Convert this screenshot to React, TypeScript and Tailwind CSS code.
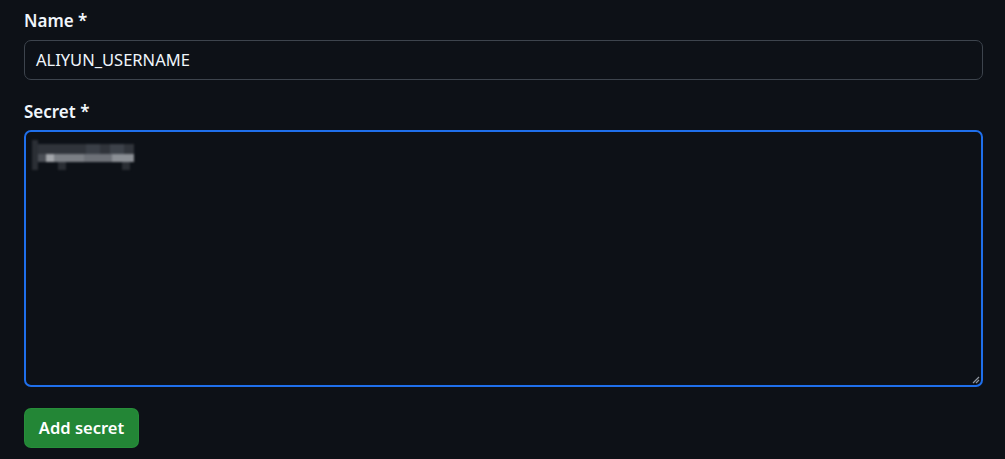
import React from "react";

// pixelated (redacted) secret value: [left, top, width, height, colour]
const MOSAIC: [number, number, number, number, string][] = [
    [6, 8, 6, 30, "#2b2f35"],
    [12, 12, 96, 10, "#30343b"],
    [60, 12, 14, 10, "#3a3f47"],
    [84, 12, 14, 10, "#3d424a"],
    [12, 22, 8, 8, "#4a4e55"],
    [20, 22, 8, 8, "#a3a6ab"],
    [28, 22, 30, 8, "#7b7f85"],
    [58, 22, 28, 8, "#6d7178"],
    [86, 22, 22, 8, "#8b8f95"],
    [32, 30, 8, 8, "#2a2e34"],
    [96, 30, 8, 8, "#2a2e34"],
];

export default function App() {
    return (
        <div
            className="w-[1005px] h-[459px] overflow-hidden bg-[#0d1117] text-[#f0f6fc] px-6 pt-[10px]"
            style={{ fontFamily: '"Noto Sans", "Open Sans", sans-serif' }}
        >
            <form className="flex flex-col" onSubmit={(e) => e.preventDefault()}>
                <label className="text-[17px] leading-[22px] font-semibold h-[22px]">
                    Name *
                </label>
                <div className="mt-2 h-[40px] w-[959px] rounded-[7px] border border-[#3d444d] bg-[#0d1117] flex items-center px-[11px]">
                    <span className="text-[16.5px] text-[#f0f6fc]">ALIYUN_USERNAME</span>
                </div>

                <label className="mt-[21px] text-[17px] leading-[22px] font-semibold h-[22px]">
                    Secret *
                </label>
                <div className="relative mt-[7px] h-[257px] w-[959px] rounded-[7px] border-2 border-[#1f6feb] bg-[#0d1117]">
                    <div className="absolute left-0 top-0 blur-[0.8px]">
                        {MOSAIC.map(([l, t, w, h, c], i) => (
                            <div
                                key={i}
                                className="absolute"
                                style={{ left: l, top: t, width: w, height: h, background: c }}
                            />
                        ))}
                    </div>
                    {/* resize grip */}
                    <svg
                        className="absolute right-[1px] bottom-[1px]"
                        width="8"
                        height="8"
                        viewBox="0 0 8 8"
                    >
                        <path d="M7 1 L1 7 M7 4 L4 7" stroke="#9198a1" strokeWidth="1.2" />
                    </svg>
                </div>

                <div className="mt-[21px]">
                    <button
                        type="submit"
                        className="h-[40px] w-[115px] rounded-[7px] bg-[#238636] border border-[#2e9a40]/40 text-white text-[16.5px] font-semibold"
                    >
                        Add secret
                    </button>
                </div>
            </form>
        </div>
    );
}
